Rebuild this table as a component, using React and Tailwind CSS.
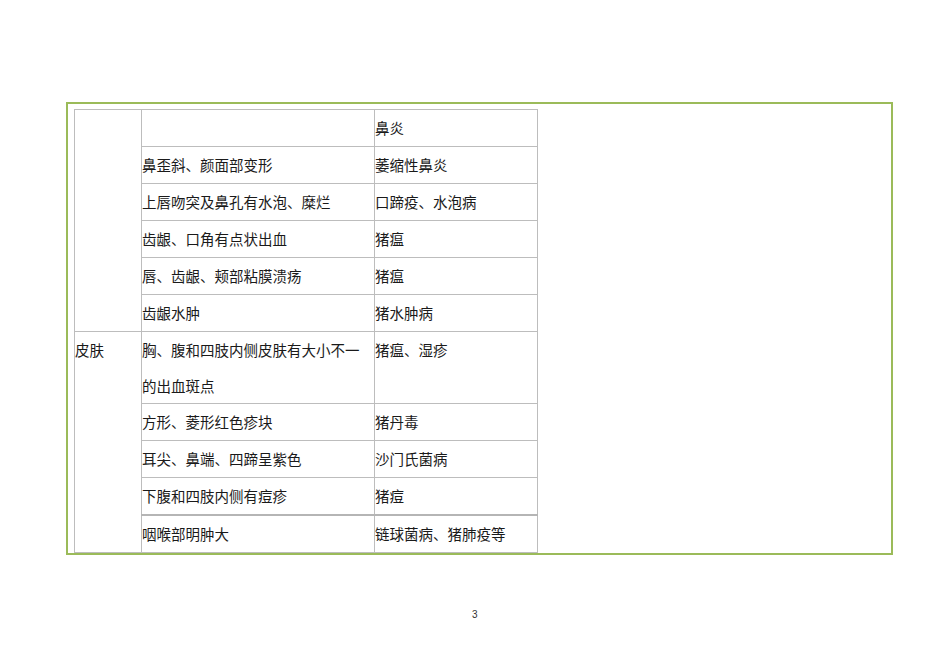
import React from 'react';

const topRows = [
  ['', '鼻炎'],
  ['鼻歪斜、颜面部变形', '萎缩性鼻炎'],
  ['上唇吻突及鼻孔有水泡、糜烂', '口蹄疫、水泡病'],
  ['齿龈、口角有点状出血', '猪瘟'],
  ['唇、齿龈、颊部粘膜溃疡', '猪瘟'],
  ['齿龈水肿', '猪水肿病'],
];

const skinRows = [
  ['胸、腹和四肢内侧皮肤有大小不一的出血斑点', '猪瘟、湿疹'],
  ['方形、菱形红色疹块', '猪丹毒'],
  ['耳尖、鼻端、四蹄呈紫色', '沙门氏菌病'],
  ['下腹和四肢内侧有痘疹', '猪痘'],
  ['咽喉部明肿大', '链球菌病、猪肺疫等'],
];

const cell = 'border border-[#bdbdbd] p-0 pr-[4px] align-top leading-[36px] h-[37px]';

export default function App() {
  return (
    <div className="w-[950px] h-[672px] bg-white text-[14.5px] text-[#1a1a1a] font-['Noto_Sans_CJK_SC',sans-serif]">
      <div className="pt-[102px] pl-[66px]">
        <div className="w-[827px] border-2 border-[#9bbb59] pt-[5px] pl-[6px]">
          <table className="w-[463px] border-collapse border border-[#c4c4c4] table-fixed">
            <colgroup>
              <col className="w-[67px]" />
              <col className="w-[233px]" />
              <col className="w-[163px]" />
            </colgroup>
            <tbody>
              {topRows.map((r, i) => (
                <tr key={i}>
                  {i === 0 && <td rowSpan={6} className={cell}></td>}
                  <td className={cell}>{r[0]}</td>
                  <td className={cell}>{r[1]}</td>
                </tr>
              ))}
              {skinRows.map((r, i) => (
                <tr key={'s' + i} className={i === 4 ? 'border-t-2 border-[#b5b5b5]' : ''}>
                  {i === 0 && <td rowSpan={5} className={cell}>皮肤</td>}
                  <td className={i === 0 ? cell + ' !leading-[35.5px]' : cell}>{r[0]}</td>
                  <td className={cell}>{r[1]}</td>
                </tr>
              ))}
            </tbody>
          </table>
        </div>
      </div>
      <div className="mt-[55px] pl-[472px] text-[10px] leading-none text-[#333] font-['Liberation_Sans',sans-serif]">3</div>
    </div>
  );
}
